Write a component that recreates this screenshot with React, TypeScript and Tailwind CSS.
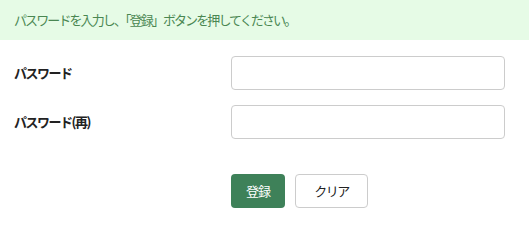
export default function App() {
  return (
    <div className="w-[529px] h-[225px] bg-white font-['Noto_Sans_CJK_JP',sans-serif] text-[13px] text-[#222]">
      <div className="h-10 bg-[#e6fbe6] flex items-center pl-[14px]">
        <p className="text-[13px] tracking-[-1.9px] text-[#4a8752]">
          パスワードを入力し、「登録」ボタンを押してください。
        </p>
      </div>

      <form className="pt-4 pl-[14px] pr-6" onSubmit={(e) => e.preventDefault()}>
        <div className="flex flex-col gap-[15px]">
          <div className="flex items-center">
            <label htmlFor="pw" className="w-[217px] font-bold tracking-[-1.5px]">
              パスワード
            </label>
            <input
              id="pw"
              type="password"
              className="w-[274px] h-[34px] border border-[#ccc] rounded-[4px] px-3 outline-none"
            />
          </div>
          <div className="flex items-center">
            <label htmlFor="pw2" className="w-[217px] font-bold tracking-[-1.5px]">
              パスワード(再)
            </label>
            <input
              id="pw2"
              type="password"
              className="w-[274px] h-[34px] border border-[#ccc] rounded-[4px] px-3 outline-none"
            />
          </div>
        </div>

        <div className="flex gap-[10px] mt-[35px] ml-[217px]">
          <button
            type="submit"
            className="w-[54px] h-[34px] rounded-[4px] bg-[#3e8159] text-white tracking-[-1px]"
          >
            登録
          </button>
          <button
            type="reset"
            className="w-[73px] h-[34px] rounded-[4px] border border-[#ccc] bg-white text-[#222] tracking-[-1.5px]"
          >
            クリア
          </button>
        </div>
      </form>
    </div>
  )
}
